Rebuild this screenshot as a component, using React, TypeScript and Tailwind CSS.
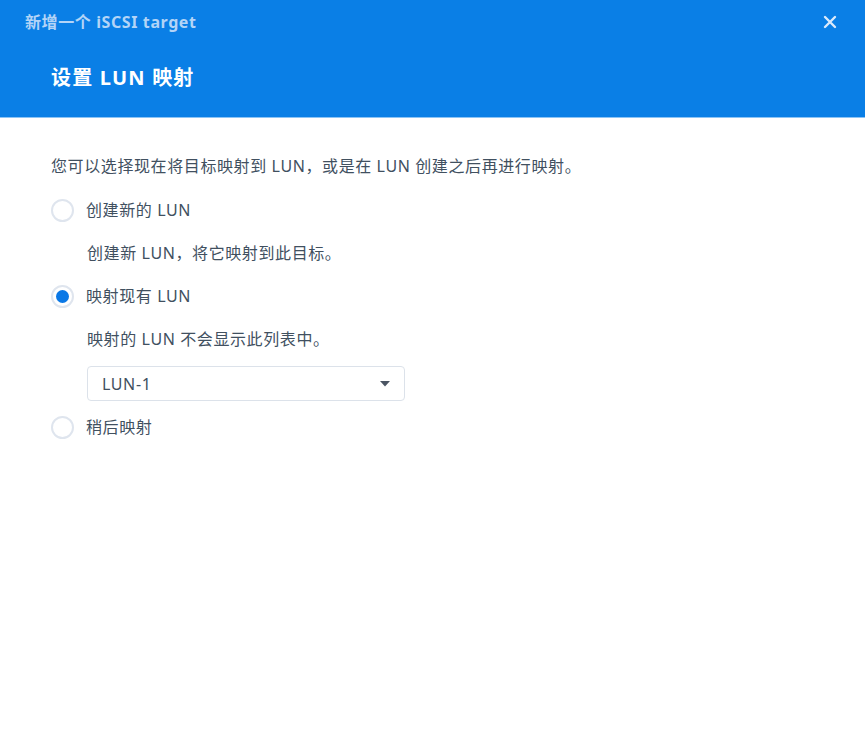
import { useState } from "react";

const font = { fontFamily: '"Noto Sans", "Noto Sans CJK SC", sans-serif' };

function Radio({ checked, label, onClick }: { checked: boolean; label: string; onClick: () => void }) {
  return (
    <button onClick={onClick} className="flex items-center h-[24px] text-left">
      <span className="w-[23px] h-[23px] rounded-full border-2 border-[#dfe5ee] bg-white flex items-center justify-center">
        {checked && <span className="w-[13px] h-[13px] rounded-full bg-[#0a78e6]" />}
      </span>
      <span className="ml-[12px] text-[16px] tracking-[0.6px] text-[#41505f]">{label}</span>
    </button>
  );
}

export default function App() {
  const [mode, setMode] = useState("existing");

  return (
    <div className="w-[865px] h-[751px] bg-white flex flex-col" style={font}>
      {/* header */}
      <div className="h-[118px] bg-[#0a7fe6] border-b border-[#8cc4f5] flex flex-col">
        <div className="h-[44px] flex items-center justify-between pl-[25px] pr-[28px]">
          <span className="text-[16px] tracking-[0.6px] font-bold text-[#b3d4f7]">新增一个 iSCSI target</span>
          <svg width="14" height="14" viewBox="0 0 14 14" className="text-[#dbeafb]">
            <path d="M2 2 L12 12 M12 2 L2 12" stroke="currentColor" strokeWidth="2.4" strokeLinecap="round" />
          </svg>
        </div>
        <div className="pl-[51px] pt-[20px]">
          <h1 className="text-[20px] tracking-[1.2px] font-bold text-white leading-[28px]">设置 LUN 映射</h1>
        </div>
      </div>

      {/* body */}
      <div className="pl-[51px] pt-[38px] flex flex-col">
        <p className="text-[16px] tracking-[0.6px] leading-[20px] text-[#41505f]">
          您可以选择现在将目标映射到 LUN，或是在 LUN 创建之后再进行映射。
        </p>

        <div className="mt-[22px]">
          <Radio checked={mode === "new"} label="创建新的 LUN" onClick={() => setMode("new")} />
        </div>
        <p className="mt-[21px] ml-[36px] text-[16px] tracking-[0.6px] leading-[20px] text-[#41505f]">创建新 LUN，将它映射到此目标。</p>

        <div className="mt-[21px]">
          <Radio checked={mode === "existing"} label="映射现有 LUN" onClick={() => setMode("existing")} />
        </div>
        <p className="mt-[21px] ml-[36px] text-[16px] tracking-[0.6px] leading-[20px] text-[#41505f]">映射的 LUN 不会显示此列表中。</p>

        <div className="mt-[17px] ml-[36px] w-[318px] h-[35px] border border-[#dce2ea] rounded-[4px] flex items-center justify-between pl-[14px] pr-[14px]">
          <span className="text-[16px] tracking-[0.6px] text-[#41505f]">LUN-1</span>
          <svg width="10" height="6" viewBox="0 0 10 6">
            <path d="M0 0 H10 L5 5.5 Z" fill="#4b5563" />
          </svg>
        </div>

        <div className="mt-[14px]">
          <Radio checked={mode === "later"} label="稍后映射" onClick={() => setMode("later")} />
        </div>
      </div>
    </div>
  );
}
